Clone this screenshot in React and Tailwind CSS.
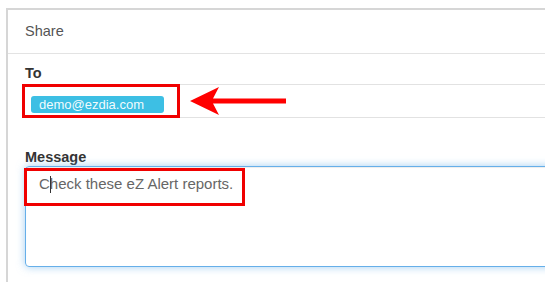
import React from 'react';

const RedArrow = () => (
    <svg width="96" height="30" viewBox="0 0 96 30" className="block">
        <path d="M0 15 L29 1 L23 12.5 L96 12.5 L96 17.5 L23 17.5 L29 29 Z" fill="#ff0000" />
    </svg>
);

export default function App() {
    return (
        <div className="w-[558px] h-[287px] bg-white overflow-hidden pl-[6px] pt-[8px] font-['Liberation_Sans',Arial,sans-serif]">
            {/* Dialog */}
            <div className="w-[539px] h-[274px] border-l-2 border-t-2 border-[#d6d6d6] overflow-hidden">
                {/* Header */}
                <div className="h-[44px] flex items-center pl-[17px] border-b border-[#e3e3e3]">
                    <span className="text-[14.5px] text-[#555]">Share</span>
                </div>

                {/* Body */}
                <div className="pl-[17px] pt-[10px]">
                    <label className="block h-[18px] leading-[18px] text-[14.5px] font-bold text-[#333] mb-[2px]">To</label>
                    <div className="relative w-[520px] h-[34px] border-y border-[#e2e2e2] pl-[6px] pt-[7px]">
                        <span className="inline-flex items-center w-[133px] h-[17px] rounded-[3px] bg-[#3dbfe4] pl-[8px] text-[13px] leading-none text-white/95">
                            demo@ezdia.com
                        </span>
                        {/* annotation */}
                        <div className="absolute left-[-3px] top-[-1px] w-[158px] h-[34px] border-[3px] border-[#f00000]" />
                        <div className="absolute left-[165px] top-[1px]">
                            <RedArrow />
                        </div>
                    </div>

                    <label className="block h-[18px] leading-[18px] text-[14.5px] font-bold text-[#333] mt-[30px]">Message</label>
                    <div className="relative w-[530px] h-[101px] border border-[#66afe9] rounded-[4px] shadow-[inset_0_1px_1px_rgba(0,0,0,0.075),0_0_8px_rgba(102,175,233,0.6)] pl-[13px] pt-[7px]">
                        <p className="text-[15px] leading-[20px] text-[#666]">
                            C<span className="relative"><span className="absolute left-0 top-[1px] w-px h-[17px] bg-[#333]" /></span>heck these eZ Alert reports.
                        </p>
                        {/* annotation */}
                        <div className="absolute left-[-2px] top-[1px] w-[221px] h-[38px] border-[3px] border-[#f00000]" />
                    </div>
                </div>
            </div>
        </div>
    );
}
